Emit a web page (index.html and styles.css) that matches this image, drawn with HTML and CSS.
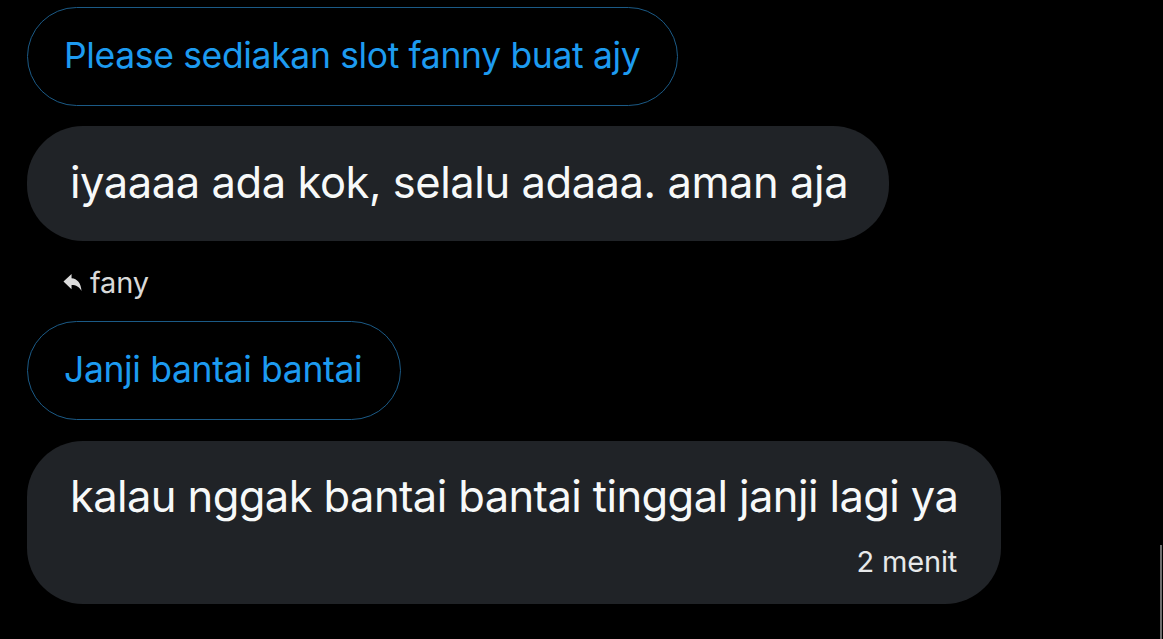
FILE: index.html
```html
<!DOCTYPE html>
<html lang="id">
<head>
<meta charset="utf-8">
<link rel="stylesheet" href="styles.css">
</head>
<body>
<div class="chat">
  <div class="quote quote-first"><span class="quote-text">Please sediakan slot fanny buat ajy</span></div>
  <div class="bubble bubble-short"><span class="msg">iyaaaa ada kok, selalu adaaa. aman aja</span></div>
  <div class="reply">
    <svg class="reply-icon" viewBox="0 0 20 20" width="19" height="19"><path d="M0.5 9 L9 1 L9 5.5 C15 6 19 10.5 19.5 19 C17 14.5 14 12.6 9 12.6 L9 17 Z" fill="#dcdcdc"/></svg>
    <span class="reply-name">fany</span>
  </div>
  <div class="quote quote-second"><span class="quote-text">Janji bantai bantai</span></div>
  <div class="bubble bubble-long">
    <span class="msg msg-long">kalau nggak bantai bantai tinggal janji lagi ya</span>
    <span class="time">2 menit</span>
  </div>
</div>
<div class="scroll"></div>
</body>
</html>
```
FILE: styles.css
```css
html, body {
  margin: 0;
  padding: 0;
  background: #000;
  width: 1163px;
  height: 639px;
  overflow: hidden;
  font-family: "Inter", "Liberation Sans", sans-serif;
  position: relative;
}
.chat {
  display: flex;
  flex-direction: column;
  align-items: flex-start;
  padding: 7px 0 0 27px;
}
.quote {
  box-sizing: border-box;
  height: 99px;
  border: 1.5px solid #1b5a86;
  border-radius: 50px;
  display: flex;
  align-items: center;
  padding: 0 36px 1px;
  white-space: nowrap;
}
.quote-text {
  color: #1d9bf0;
  font-size: 35.5px;
  line-height: 1;
  letter-spacing: -0.35px;
}
.quote-first { width: 651px; }
.quote-second { width: 374px; }
.bubble {
  box-sizing: border-box;
  background: #202327;
  color: #f7f9f9;
  border-radius: 56px;
  padding: 0 43px;
  white-space: nowrap;
}
.msg {
  font-size: 43.5px;
  line-height: 1;
  letter-spacing: -0.45px;
}
.msg-long {
  letter-spacing: -0.6px;
}
.bubble-short {
  margin-top: 20px;
  width: 862px;
  height: 115px;
  display: flex;
  align-items: center;
  padding-bottom: 2px;
}
.bubble-long {
  margin-top: 21px;
  width: 974px;
  height: 163px;
  display: flex;
  flex-direction: column;
  padding-top: 34px;
}
.time {
  align-self: flex-end;
  font-size: 29px;
  line-height: 1;
  margin-top: 28px;
  margin-right: 1px;
  letter-spacing: -0.2px;
  color: #e7e9ea;
}
.reply {
  display: flex;
  align-items: center;
  gap: 8px;
  margin: 24px 0 22px 36px;
  height: 34px;
}
.reply-name {
  color: #d9d9d9;
  font-size: 29px;
  line-height: 1;
  letter-spacing: -0.2px;
}
.scroll {
  position: absolute;
  right: 1px;
  top: 545px;
  width: 2px;
  height: 94px;
  background: #6e6e6e;
}
```
